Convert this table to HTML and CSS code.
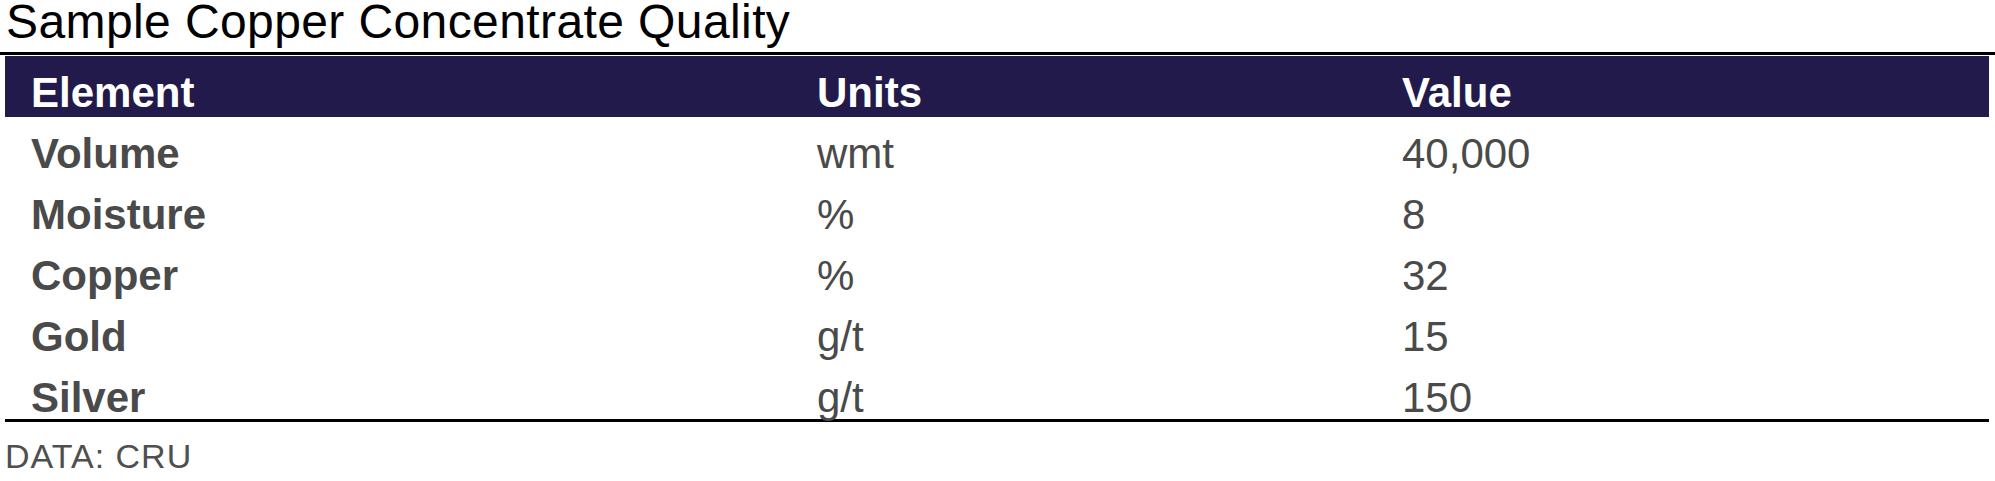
FILE: index.html
```html
<!DOCTYPE html>
<html>
<head>
<meta charset="utf-8">
<link rel="stylesheet" href="styles.css">
</head>
<body>
<div class="page">
  <div class="title">Sample Copper Concentrate Quality</div>
  <div class="table">
    <div class="row head">
      <div class="cell">Element</div>
      <div class="cell">Units</div>
      <div class="cell">Value</div>
    </div>
    <div class="row">
      <div class="cell name">Volume</div>
      <div class="cell">wmt</div>
      <div class="cell">40,000</div>
    </div>
    <div class="row">
      <div class="cell name">Moisture</div>
      <div class="cell">%</div>
      <div class="cell">8</div>
    </div>
    <div class="row">
      <div class="cell name">Copper</div>
      <div class="cell">%</div>
      <div class="cell">32</div>
    </div>
    <div class="row">
      <div class="cell name">Gold</div>
      <div class="cell">g/t</div>
      <div class="cell">15</div>
    </div>
    <div class="row last">
      <div class="cell name">Silver</div>
      <div class="cell">g/t</div>
      <div class="cell">150</div>
    </div>
  </div>
  <div class="source">DATA: CRU</div>
</div>
</body>
</html>
```
FILE: styles.css
```css
html, body {
  margin: 0;
  padding: 0;
  background: #ffffff;
}
.page {
  font-family: "Liberation Sans", Arial, sans-serif;
  width: 1995px;
}
.title {
  font-size: 48px;
  letter-spacing: 0.4px;
  line-height: 44px;
  color: #000000;
  padding: 0 0 8px 6px;
  border-bottom: 3px solid #000000;
}
.table {
  margin: 1px 6px 0 5px;
  display: flex;
  flex-direction: column;
}
.row {
  display: grid;
  grid-template-columns: 786px 585px 1fr;
  height: 61px;
  box-sizing: border-box;
  padding-top: 13px;
  font-size: 42px;
  line-height: 47px;
  color: #4a4a4a;
}
.row.head {
  background: #211a4b;
  color: #ffffff;
  font-weight: bold;
}
.row.last {
  border-bottom: 3px solid #000000;
}
.cell {
  padding-left: 26px;
  white-space: nowrap;
}
.cell.name {
  font-weight: bold;
}
.source {
  margin-top: 14px;
  padding-left: 5px;
  font-size: 34px;
  letter-spacing: 1px;
  line-height: 40px;
  color: #4f4f4f;
}
```
